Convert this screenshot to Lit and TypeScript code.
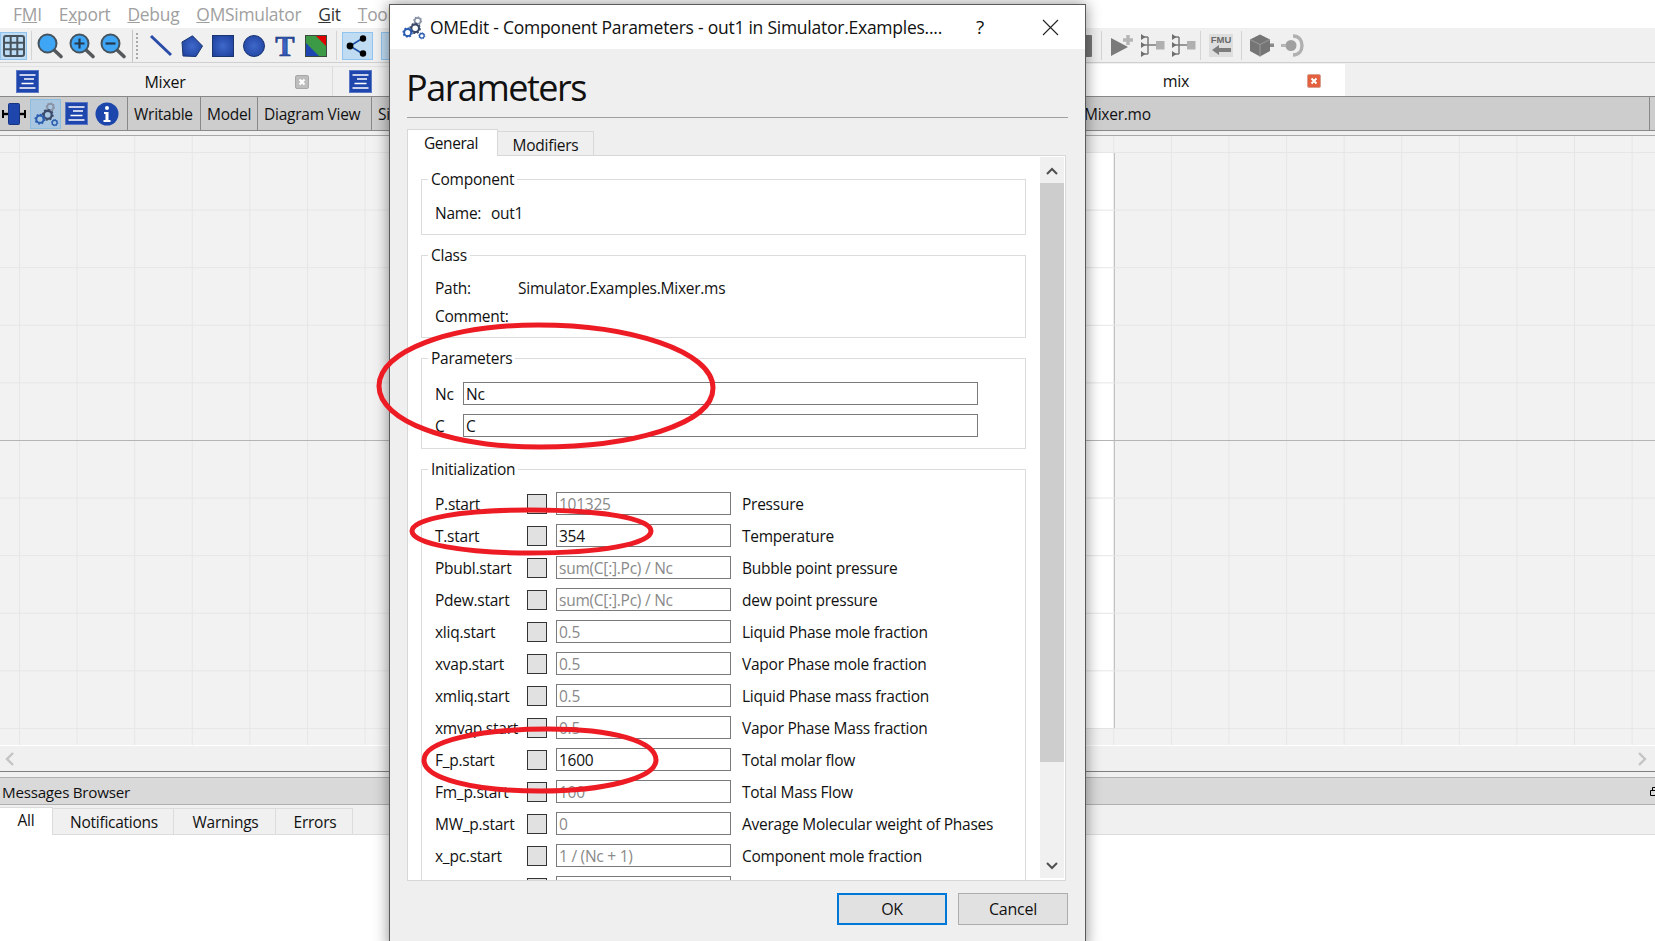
import { LitElement, html, css, svg } from 'lit';
import { customElement } from 'lit/decorators.js';

const gear = (cx: number, cy: number, r: number, color: string) => svg`
  <circle cx=${cx} cy=${cy} r=${r} fill="none" stroke=${color} stroke-width=${r * 0.55}></circle>
  <circle cx=${cx} cy=${cy} r=${r * 1.3} fill="none" stroke=${color} stroke-width=${r * 0.4} stroke-dasharray=${`${r * 0.5} ${r * 0.5}`}></circle>`;

const gearsIcon = (size: number) => html`
  <svg width=${size} height=${size} viewBox="0 0 30 30">
    ${gear(20, 7, 3.6, '#8a93a6')}
    ${gear(17, 16, 4.6, '#3a4a6a')}
    ${gear(8, 21, 4.2, '#2a5db0')}
    ${gear(25, 25, 2.8, '#2a5db0')}
  </svg>`;

const lens = (sign: string) => html`
  <svg class="lens" width="26" height="26" viewBox="0 0 26 26">
    <line x1="16" y1="16" x2="24" y2="23.5" stroke="#55595c" stroke-width="3.6" stroke-linecap="round"></line>
    <circle cx="10.5" cy="10.5" r="9" fill="#3fa6f6" stroke="#44535e" stroke-width="2"></circle>
    ${sign === '+' ? svg`<path d="M10.5 5.5v10M5.5 10.5h10" stroke="#243a4c" stroke-width="2.2"></path>` : ''}
    ${sign === '-' ? svg`<path d="M5.5 10.5h10" stroke="#243a4c" stroke-width="2.2"></path>` : ''}
  </svg>`;

const docIcon = (size: number) => html`
  <svg width=${size} height=${size} viewBox="0 0 23 23">
    <rect x="0.5" y="0.5" width="22" height="22" fill="#1f46ad" stroke="#5b78c4"></rect>
    <path d="M3.5 5h16M8 9h10M5.5 13.5h12M3.5 18h16" stroke="#fff" stroke-width="1.4"></path>
  </svg>`;

const shapeIcons = [
  svg`<line x1="1" y1="1" x2="21" y2="20" stroke="#2a4ca8" stroke-width="3"></line>`,
  svg`<polygon points="1,7 11.5,0.8 21.5,11 15,21.5 2,21" fill="url(#blueFill)" stroke="#1b3570"></polygon>`,
  svg`<rect x="0.5" y="0.5" width="21" height="21" fill="url(#blueFill)" stroke="#1b3570"></rect>`,
  svg`<circle cx="11" cy="11" r="10.5" fill="url(#blueFill)" stroke="#1b3570"></circle>`,
  svg`<text x="11" y="21" text-anchor="middle" class="t-glyph" fill="url(#blueFill)" stroke="#1b3570" stroke-width="0.6">T</text>`,
  svg`<rect width="22" height="22" fill="#3c9a46"></rect>
      <polygon points="10,0 22,0 22,12" fill="#e00000"></polygon>
      <polygon points="0,7 0,22 15,22" fill="#1e45b0"></polygon>
      <rect x="0.5" y="0.5" width="21" height="21" fill="none" stroke="#3b4a3e"></rect>`,
];

const treeIcon = html`
  <svg width="24" height="23" viewBox="0 0 24 23">
    <path d="M7 3v17M1 3h6M1 11h14M1 20h6" fill="none" stroke="#7a7a7a" stroke-width="1.5"></path>
    <path d="M0 0l4.500 3-4.500 3zM0 8l4.500 3-4.500 3zM0 17l4.500 3-4.500 3z" fill="#6e6e6e"></path>
    <rect x="15" y="7" width="8.500" height="8.500" fill="#b0b0b0"></rect>
  </svg>`;

interface ParamRow {
  name: string;
  value: string;
  desc: string;
  set?: boolean;
}

const initRows: ParamRow[] = [
  { name: 'P.start', value: '101325', desc: 'Pressure' },
  { name: 'T.start', value: '354', desc: 'Temperature', set: true },
  { name: 'Pbubl.start', value: 'sum(C[:].Pc) / Nc', desc: 'Bubble point pressure' },
  { name: 'Pdew.start', value: 'sum(C[:].Pc) / Nc', desc: 'dew point pressure' },
  { name: 'xliq.start', value: '0.5', desc: 'Liquid Phase mole fraction' },
  { name: 'xvap.start', value: '0.5', desc: 'Vapor Phase mole fraction' },
  { name: 'xmliq.start', value: '0.5', desc: 'Liquid Phase mass fraction' },
  { name: 'xmvap.start', value: '0.5', desc: 'Vapor Phase Mass fraction' },
  { name: 'F_p.start', value: '1600', desc: 'Total molar flow', set: true },
  { name: 'Fm_p.start', value: '100', desc: 'Total Mass Flow' },
  { name: 'MW_p.start', value: '0', desc: 'Average Molecular weight of Phases' },
  { name: 'x_pc.start', value: '1 / (Nc + 1)', desc: 'Component mole fraction' },
  { name: '', value: '', desc: '' },
];

@customElement('app-root')
export class AppRoot extends LitElement {
  static styles = css`
    :host {
      display: block;
      position: relative;
      height: 941px;
      overflow: hidden;
      background: #fff;
      color: #111;
      font-family: 'Open Sans', 'Noto Sans', sans-serif;
      font-size: 15.5px;
      letter-spacing: -0.25px;
    }
    .defs { position: absolute; width: 0; height: 0; }
    svg { display: block; flex: none; overflow: visible; }
    .t-glyph { font: bold 29px 'Liberation Serif', serif; letter-spacing: 0; }
    .fmu-text { font: bold 9.5px 'Liberation Sans', sans-serif; letter-spacing: 0; }

    /* main window */
    .menu { display: flex; height: 28px; align-items: center; font-size: 17.4px; color: #a0a0a0; padding-left: 13px; gap: 17px; }
    .menu .on { color: #333; }
    .toolbar { display: flex; align-items: center; height: 33px; padding-top: 1px; background: #f0f0f0; border-bottom: 1px solid #cfcfcf; }
    .tool-on { display: flex; align-items: center; justify-content: center; height: 28px; background: #c0dcf3; border: 1px solid #90c4ee; box-sizing: border-box; }
    .grid-btn { width: 27px; }
    .share-btn { width: 31px; margin-left: 5px; }
    .next-btn { width: 20px; margin-left: 8px; }
    .vsep { width: 1px; height: 29px; background: #d4d4d4; flex: none; }
    .sep-a { margin-left: 4px; }
    .sep-b { margin-left: 9px; }
    .sep-c { margin-left: 4px; }
    .hsplit { width: 4px; height: 32px; margin: 0 10px 0 0; border-left: 1px solid #c4c4c4; }
    .grip { width: 2px; height: 26px; margin: 3px 0 0 3px; background: repeating-linear-gradient(#a8a8a8 0 2px, transparent 2px 4px); }
    .cluster { display: flex; align-items: center; }
    .zoomers { gap: 5.5px; margin: 0 6px 0 5px; }
    .shapes { gap: 9px; margin: 0 9px 0 2.5px; }
    .spacer-left { width: 684.5px; flex: none; }
    .greys { gap: 7px; margin-left: 9px; }
    .greys2 { margin: 0 8px; }
    .greys3 { gap: 7px; margin-left: 8px; }

    .tabbar { display: flex; height: 33px; background: #f0f0f0; align-items: flex-end; }
    .tab { display: flex; align-items: center; width: 333px; height: 30px; box-sizing: border-box; border-right: 1px solid #dcdcdc; border-top: 1px solid #e2e2e2; padding-left: 16px; flex: none; }
    .tab .name { flex: 1; text-align: center; font-size: 16px; padding-right: 4px; }
    .tab.cur { height: 32px; width: 334px; background: #fff; border: none; padding: 2px 24px 0 34px; }
    .tab.cur .name { padding-right: 0; }
    .tab.blank { width: 345px; }
    .close { width: 14px; height: 14px; display: block; margin-right: 23px; }
    .tab.cur .close { margin-right: 0; }

    .viewbar { display: flex; align-items: center; height: 33px; background: #cdcdcd; border-top: 1px solid #888; border-bottom: 1px solid #888; }
    .view-icons { display: flex; align-items: center; width: 127px; padding-left: 2px; box-sizing: border-box; flex: none; }
    .gears-btn { width: 31px; height: 30px; margin: 0 4px; background: #a9c7e0; border: 1px solid #8fbde0; box-sizing: border-box; display: flex; align-items: center; justify-content: center; }
    .info { margin-left: 7px; }
    .vbtn { height: 100%; display: flex; align-items: center; border-left: 1px solid #888; padding-left: 6px; box-sizing: border-box; flex: none; font-size: 15.5px; }
    .w-writable { width: 73px; }
    .w-model { width: 57px; }
    .w-diagram { width: 114px; }
    .w-sim { width: 713px; }
    .w-path { flex: 1; border: none; padding-left: 0; }
    .vend { width: 5px; height: 100%; border-left: 1px solid #888; flex: none; }

    .gap { height: 4px; background: #f0f0f0; border-bottom: 1px solid #a8a8a8; }
    .canvas { position: relative; height: 609px; background: #f2f2f2; border-bottom: 1px solid #fff; overflow: hidden; }
    .sheet { position: absolute; left: 450px; top: 16px; width: 663px; height: 575px; background: #fff; border: 1px solid #b5b5b5; }
    .gridlines {
      position: absolute;
      inset: 0;
      background-image: linear-gradient(#e6e6e6 1px, transparent 1px), linear-gradient(90deg, #e6e6e6 1px, transparent 1px);
      background-size: 57.6px 57.6px;
      background-position: 19px 16px;
    }
    .axis { position: absolute; left: 0; right: 0; top: 304px; height: 1px; background: #b5b5b5; }
    .hscroll { display: flex; justify-content: space-between; align-items: center; height: 25px; padding: 0 8px 0 5px; background: #f0f0f0; border-bottom: 1px solid #808080; }
    .gap2 { height: 5px; background: #f0f0f0; border-bottom: 1px solid #b0b0b0; }
    .msghead { display: flex; align-items: center; justify-content: space-between; height: 25px; padding: 1px 0 0 2px; background: #d9d9d9; border-bottom: 1px solid #b0b0b0; font-size: 15.2px; }
    .dock { margin-right: -3px; }
    .msgtabs { display: flex; height: 29px; background: #f0f0f0; border-bottom: 1px solid #dcdcdc; align-items: flex-end; }
    .mtab { height: 26px; display: flex; align-items: center; justify-content: center; border-top: 1px solid #dcdcdc; border-right: 1px solid #dcdcdc; box-sizing: border-box; font-size: 15.5px; padding: 1px 0 0 2px; }
    .mtab.all { width: 53px; height: 28px; background: #fff; margin-bottom: -1px; padding: 0 0 3px; }
    .mtab.notif { width: 121px; }
    .mtab.warn { width: 102px; }
    .mtab.err { width: 77px; }

    /* dialog */
    .dialog {
      position: absolute;
      left: 389px;
      top: 4px;
      width: 697px;
      height: 945px;
      box-sizing: border-box;
      display: flex;
      flex-direction: column;
      background: #efefef;
      border: 1px solid #5a5a5a;
      box-shadow: 0 0 14px rgba(0, 0, 0, 0.45);
    }
    .title { display: flex; align-items: center; height: 44px; flex: none; background: #fff; padding-left: 11px; font-size: 17.5px; }
    .title .txt { margin-left: 4px; width: 540px; flex: none; }
    .help { width: 20px; text-align: center; font-size: 19px; }
    .xbtn { margin-left: 52px; }
    .dbody { flex: 1; display: flex; flex-direction: column; padding: 0 17px; min-height: 0; }
    h1 { margin: 0 0 0 -1px; font-size: 36px; font-weight: 400; line-height: 44px; padding-top: 17px; letter-spacing: -1.5px; height: 51px; flex: none; }
    .sep { height: 1px; background: #a0a0a0; flex: none; }
    .dtabs { display: flex; align-items: flex-end; height: 38px; flex: none; margin-bottom: -1px; }
    .dtab { height: 25px; display: flex; align-items: center; justify-content: center; box-sizing: border-box; border: 1px solid #d8d8d8; border-left: none; font-size: 15.5px; }
    .dtab.cur { width: 91px; height: 27px; padding-right: 3px; background: #fff; border-left: 1px solid #d8d8d8; border-bottom: none; position: relative; z-index: 1; letter-spacing: -0.45px; }
    .dtab.other { width: 96px; padding-top: 2px; }
    .panel { height: 726px; flex: none; margin-right: 2px; display: flex; background: #fff; border: 1px solid #d8d8d8; box-sizing: border-box; overflow: hidden; }
    .scrollarea { flex: 1; min-width: 0; padding: 13px 14px 0 13px; display: flex; flex-direction: column; gap: 10px; }
    fieldset { margin: 0; min-width: 0; border: 1px solid #dcdcdc; flex: none; }
    legend { margin-left: -7px; padding: 0 3px; line-height: 21px; }
    .f-comp { padding: 11px 13px 10px; }
    .f-class { padding: 11px 13px 10px; display: grid; grid-template-columns: 83px 1fr; row-gap: 6px; align-items: center; }
    .f-comp .kv { display: flex; height: 23px; align-items: center; }
    .f-comp .k { width: 56px; }
    .line { line-height: 22px; }
    .f-params { padding: 13px 13px 11px; display: grid; grid-template-columns: 28px 515px; row-gap: 9px; align-items: center; }
    .f-init { padding: 12px 13px 0; display: grid; grid-template-columns: 92px 20px 184px 1fr; row-gap: 9px; align-items: center; }
    .input { height: 23px; box-sizing: border-box; border: 1px solid #7a7a7a; background: #fff; padding: 1px 0 0 2px; line-height: 20px; white-space: nowrap; overflow: hidden; }
    .input.off { color: #8a8a8a; }
    .value { margin-left: 9px; width: 175px; }
    .desc { padding-left: 11px; white-space: nowrap; }
    .check { width: 20px; height: 20px; box-sizing: border-box; border: 1px solid #333; background: #e1e1e1; }
    .vscroll { width: 24px; flex: none; margin: 1px 1px 2px 0; background: #f0f0f0; display: flex; flex-direction: column; }
    .arrow { height: 26px; padding-top: 1px; box-sizing: border-box; display: flex; align-items: center; justify-content: center; flex: none; }
    .thumb { height: 579px; background: #cdcdcd; flex: none; }
    .arrow.down { margin-top: auto; }
    .actions { display: flex; justify-content: flex-end; gap: 11px; margin-top: 12px; flex: none; }
    .btn { width: 110px; height: 32px; box-sizing: border-box; background: #e1e1e1; border: 1px solid #adadad; display: flex; align-items: center; justify-content: center; font-size: 16px; }
    .btn.primary { border: 2px solid #0078d7; }

    .marks { position: absolute; left: 0; top: 0; pointer-events: none; }
  `;

  private closeIcon(bg: string, edge: string) {
    return html`<svg class="close" viewBox="0 0 14 14">
      <rect x="0.5" y="0.5" width="13" height="13" rx="1.5" fill=${bg} stroke=${edge}></rect>
      <path d="M4.5 4.5l5 5M9.5 4.5l-5 5" stroke="#fff" stroke-width="2"></path>
    </svg>`;
  }

  private renderToolbar() {
    return html`
      <div class="toolbar">
        <div class="tool-on grid-btn">
          <svg width="22" height="22" viewBox="0 0 22 22">
            <rect x="1" y="1" width="20" height="20" rx="2" fill="#bcdcf5" stroke="#46525c" stroke-width="2"></rect>
            <path d="M7.7 1v20M14.3 1v20M1 7.7h20M1 14.3h20" stroke="#46525c" stroke-width="2"></path>
          </svg>
        </div>
        <div class="vsep sep-a"></div>
        <div class="cluster zoomers">${lens('')}${lens('+')}${lens('-')}</div>
        <div class="hsplit"><div class="grip"></div></div>
        <div class="cluster shapes">
          ${shapeIcons.map((s) => html`<svg width="22" height="22" viewBox="0 0 22 22">${s}</svg>`)}
        </div>
        <div class="vsep"></div>
        <div class="tool-on share-btn">
          <svg width="22" height="22" viewBox="0 0 22 22">
            <path d="M17 3L4 11l13 8" fill="none" stroke="#1c4fa5" stroke-width="1.6"></path>
            <circle cx="17" cy="3.5" r="3.2"></circle><circle cx="4" cy="11" r="3.4"></circle><circle cx="17" cy="18.5" r="3.2"></circle>
          </svg>
        </div>
        <div class="tool-on next-btn"></div>
        <div class="spacer-left"></div>
        <svg width="7" height="22" viewBox="0 0 7 22"><rect width="7" height="22" rx="1" fill="#777"></rect></svg>
        <div class="vsep sep-b"></div>
        <div class="cluster greys">
          <svg width="23" height="23" viewBox="0 0 23 23">
            <polygon points="0,4 0,22 17,13" fill="#7a7a7a"></polygon>
            <path d="M17 1v10M12 6h10" stroke="#b5b5b5" stroke-width="3.4"></path>
          </svg>
          ${treeIcon}${treeIcon}
        </div>
        <div class="vsep sep-c"></div>
        <div class="cluster greys2">
          <svg width="24" height="23" viewBox="0 0 24 23">
            <rect width="24" height="23" fill="#dedede"></rect>
            <text x="12" y="9" text-anchor="middle" class="fmu-text" fill="#6a6a6a">FMU</text>
            <path d="M3 16l7-5v3h12v4H10v3z" fill="#7d7d7d"></path>
          </svg>
        </div>
        <div class="vsep"></div>
        <div class="cluster greys3">
          <svg width="24" height="23" viewBox="0 0 24 23">
            <polygon points="10,0.5 20,5.5 20,17 10,22.5 0,17 0,5.5" fill="#757575"></polygon>
            <path d="M0 5.5l10 5 10-5M10 10.5v12" fill="none" stroke="#9a9a9a"></path>
            <rect x="20" y="9.5" width="4" height="3.5" fill="#8a8a8a"></rect>
          </svg>
          <svg width="24" height="23" viewBox="0 0 24 23">
            <circle cx="10" cy="11.5" r="5.5" fill="#a0a0a0"></circle>
            <path d="M0 11.5h5" stroke="#b5b5b5" stroke-width="3"></path>
            <path d="M12 2c6 0 9 4.500 9 9.500S18 21 12 21" fill="none" stroke="#b0b0b0" stroke-width="3.4"></path>
          </svg>
        </div>
      </div>`;
  }

  private renderMarks() {
    return html`
      <svg class="marks" width="1655" height="941" viewBox="0 0 1655 941" fill="none" stroke="#ed1c24" stroke-width="5">
        <path d="M379 386C379 351 450 325 538 325C630 325 713 351 713 388C713 425 630 447 540 447C450 447 379 421 379 386Z"></path>
        <path d="M412 531C412 518 465 510 530 510C600 510 651 518 651 531C651 544 600 553 530 553C465 553 412 544 412 531Z"></path>
        <path d="M424 760C424 741 480 729 548 729C612 729 656 741 656 760C656 778 605 791 540 791C475 791 424 779 424 760Z"></path>
      </svg>`;
  }

  render() {
    return html`
      <svg class="defs" aria-hidden="true">
        <defs>
          <radialGradient id="blueFill" cx="50%" cy="50%" r="65%">
            <stop offset="0" stop-color="#3f69cb"></stop>
            <stop offset="1" stop-color="#1d3f9c"></stop>
          </radialGradient>
        </defs>
      </svg>

      <div class="menu">
        <span>F<u>M</u>I</span><span>E<u>x</u>port</span><span><u>D</u>ebug</span><span><u>O</u>MSimulator</span>
        <span class="on"><u>G</u>it</span><span><u>T</u>ools</span>
      </div>
      ${this.renderToolbar()}

      <div class="tabbar">
        <div class="tab">${docIcon(23)}<span class="name">Mixer</span>${this.closeIcon('#bdbdbd', '#a8a8a8')}</div>
        <div class="tab">${docIcon(23)}</div>
        <div class="tab blank"></div>
        <div class="tab cur"><span class="name">mix</span>${this.closeIcon('#e4603e', '#d9a08f')}</div>
      </div>

      <div class="viewbar">
        <div class="view-icons">
          <svg width="24" height="22" viewBox="0 0 24 22">
            <path d="M0 11h24" stroke="#000" stroke-width="2.4"></path>
            <path d="M1 7v8M23 7v8" stroke="#000" stroke-width="2"></path>
            <rect x="6.500" y="0.500" width="11" height="21" rx="1" fill="#1f46ad" stroke="#163480"></rect>
          </svg>
          <div class="gears-btn">${gearsIcon(26)}</div>
          ${docIcon(23)}
          <svg class="info" width="24" height="24" viewBox="0 0 24 24">
            <circle cx="12" cy="12" r="11.500" fill="#1d46ad"></circle>
            <circle cx="12" cy="6" r="2" fill="#fff"></circle>
            <path d="M9 10h4.500v8H15.500v2h-7v-2h2v-6H9z" fill="#fff"></path>
          </svg>
        </div>
        <div class="vbtn w-writable">Writable</div>
        <div class="vbtn w-model">Model</div>
        <div class="vbtn w-diagram">Diagram View</div>
        <div class="vbtn w-sim">Simulation View</div>
        <div class="vbtn w-path">Mixer.mo</div>
        <div class="vend"></div>
      </div>

      <div class="gap"></div>
      <div class="canvas">
        <div class="sheet"></div>
        <div class="gridlines"></div>
        <div class="axis"></div>
      </div>
      <div class="hscroll">
        <svg width="10" height="14" viewBox="0 0 10 14"><path d="M8 1L2 7l6 6" fill="none" stroke="#c4c4c4" stroke-width="2.4"></path></svg>
        <svg width="10" height="14" viewBox="0 0 10 14"><path d="M2 1l6 6-6 6" fill="none" stroke="#c4c4c4" stroke-width="2.4"></path></svg>
      </div>
      <div class="gap2"></div>
      <div class="msghead">
        <span>Messages Browser</span>
        <svg class="dock" width="8" height="9" viewBox="0 0 8 9"><path d="M2.500 3.500V0.500h5v3M0.500 3.500h7v5h-7z" fill="none" stroke="#000"></path></svg>
      </div>
      <div class="msgtabs">
        <div class="mtab all">All</div>
        <div class="mtab notif">Notifications</div>
        <div class="mtab warn">Warnings</div>
        <div class="mtab err">Errors</div>
      </div>

      <div class="dialog">
        <div class="title">
          ${gearsIcon(25)}
          <span class="txt">OMEdit - Component Parameters - out1 in Simulator.Examples....</span>
          <span class="help">?</span>
          <svg class="xbtn" width="17" height="17" viewBox="0 0 17 17"><path d="M1 1l15 15M16 1L1 16" stroke="#222" stroke-width="1.1"></path></svg>
        </div>
        <div class="dbody">
          <h1>Parameters</h1>
          <div class="sep"></div>
          <div class="dtabs">
            <div class="dtab cur">General</div>
            <div class="dtab other">Modifiers</div>
          </div>
          <div class="panel">
            <div class="scrollarea">
              <fieldset class="f-comp">
                <legend>Component</legend>
                <div class="kv"><span class="k">Name:</span><span>out1</span></div>
              </fieldset>
              <fieldset class="f-class">
                <legend>Class</legend>
                <span class="line">Path:</span><span class="line">Simulator.Examples.Mixer.ms</span>
                <span class="line">Comment:</span><span class="line"></span>
              </fieldset>
              <fieldset class="f-params">
                <legend>Parameters</legend>
                <span>Nc</span><div class="input">Nc</div>
                <span>C</span><div class="input">C</div>
              </fieldset>
              <fieldset class="f-init">
                <legend>Initialization</legend>
                ${initRows.map((r) => html`
                  <span>${r.name}</span>
                  <div class="check"></div>
                  <div class="input value ${r.set ? '' : 'off'}">${r.value}</div>
                  <span class="desc">${r.desc}</span>
                `)}
              </fieldset>
            </div>
            <div class="vscroll">
              <div class="arrow"><svg width="12" height="8" viewBox="0 0 12 8"><path d="M1 7l5-5 5 5" fill="none" stroke="#505050" stroke-width="2"></path></svg></div>
              <div class="thumb"></div>
              <div class="arrow down"><svg width="12" height="8" viewBox="0 0 12 8"><path d="M1 1l5 5 5-5" fill="none" stroke="#505050" stroke-width="2"></path></svg></div>
            </div>
          </div>
          <div class="actions">
            <div class="btn primary">OK</div>
            <div class="btn">Cancel</div>
          </div>
        </div>
      </div>
      ${this.renderMarks()}
    `;
  }
}
